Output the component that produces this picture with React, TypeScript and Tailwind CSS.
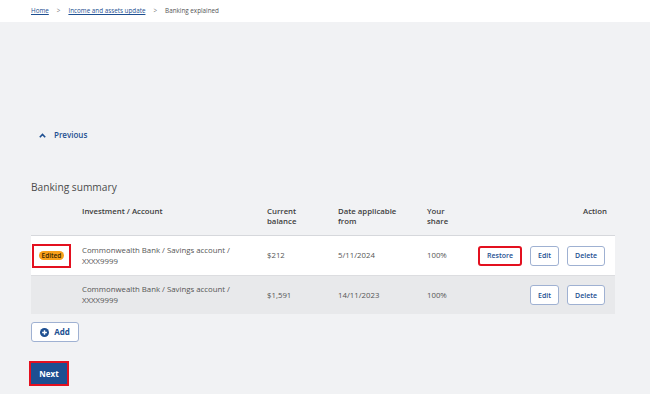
const rows = [
  {
    edited: true,
    account: "Commonwealth Bank / Savings account / XXXX9999",
    balance: "$212",
    date: "5/11/2024",
    share: "100%",
  },
  {
    edited: false,
    account: "Commonwealth Bank / Savings account / XXXX9999",
    balance: "$1,591",
    date: "14/11/2023",
    share: "100%",
  },
];

function ActionButton({ label, highlight }: { label: string; highlight?: boolean }) {
  return (
    <button
      type="button"
      className={`flex h-[20px] items-center justify-center rounded-[3px] bg-white px-[7px] text-[7px] font-semibold text-[#1d4f91] ${
        highlight ? "border-2 border-[#e3101f]" : "border border-[#9fb1d2]"
      }`}
    >
      {label}
    </button>
  );
}

export default function App() {
  return (
    <div className="min-h-[394px] bg-[#f1f2f4] font-['Open_Sans',sans-serif] text-[#4b4b4b]">
      <div className="flex h-[22px] items-center gap-[8px] bg-white px-[31px] text-[6.3px]">
        <span className="text-[#1d4f91] underline">Home</span>
        <span className="text-[#777]">&gt;</span>
        <span className="text-[#1d4f91] underline">Income and assets update</span>
        <span className="text-[#777]">&gt;</span>
        <span className="text-[#555]">Banking explained</span>
      </div>

      <div className="px-[31px]">
        <div className="mt-[107px] flex h-[12px] items-center gap-[8px] pl-[8px] text-[8px] font-semibold text-[#1d4f91]">
          <svg width="7" height="5" viewBox="0 0 7 5">
            <path d="M0.8 4.2 L3.5 1.4 L6.2 4.2" fill="none" stroke="#1d4f91" strokeWidth="1.6" />
          </svg>
          <span>Previous</span>
        </div>

        <h2 className="mt-[39px] text-[10.2px] leading-[14px] text-[#4b4b4b]">Banking summary</h2>

        <div className="mt-[12px] w-[584px]">
          <div className="grid h-[30px] grid-cols-[51px_185px_71px_89px_1fr_1fr] border-b border-[#d6d8dc] text-[7.8px] font-semibold leading-[10px] text-[#3d3d3d]">
            <div />
            <div>Investment / Account</div>
            <div>
              Current
              <br />
              balance
            </div>
            <div>
              Date applicable
              <br />
              from
            </div>
            <div>
              Your
              <br />
              share
            </div>
            <div className="pr-[8px] text-right">Action</div>
          </div>

          {rows.map((row, i) => (
            <div
              key={i}
              className={`grid h-[39px] grid-cols-[51px_185px_71px_89px_1fr_auto] items-center text-[7.8px] leading-[11px] text-[#555] ${
                row.edited ? "bg-white" : "border-t border-[#dcdde0] bg-[#e8e9eb]"
              }`}
            >
              <div className="pl-[1px]">
                {row.edited && (
                  <div className="flex h-[24px] w-[39px] items-center justify-center border-2 border-[#e3101f]">
                    <span className="rounded-full bg-[#f7a01a] px-[3px] text-[6.5px] font-semibold leading-[9px] text-[#3a2600]">
                      Edited
                    </span>
                  </div>
                )}
              </div>
              <div className="w-[162px]">{row.account}</div>
              <div>{row.balance}</div>
              <div>{row.date}</div>
              <div>{row.share}</div>
              <div className="flex items-center gap-[8px] pr-[10px]">
                {row.edited && <ActionButton label="Restore" highlight />}
                <ActionButton label="Edit" />
                <ActionButton label="Delete" />
              </div>
            </div>
          ))}
        </div>

        <button
          type="button"
          className="mt-[8px] flex h-[20px] w-[48px] items-center justify-center gap-[5px] rounded-[3px] border border-[#9fb1d2] bg-white text-[8px] font-bold text-[#1d4f91]"
        >
          <svg width="9" height="9" viewBox="0 0 10 10">
            <circle cx="5" cy="5" r="5" fill="#1d4f91" />
            <path d="M5 2.4 V7.6 M2.4 5 H7.6" stroke="white" strokeWidth="1.6" />
          </svg>
          Add
        </button>

        <button
          type="button"
          className="mt-[19px] -ml-[2px] flex h-[25px] w-[40px] items-center justify-center border-2 border-[#e3101f] bg-[#1d4f91] text-[8px] font-bold text-white"
        >
          Next
        </button>
      </div>
    </div>
  );
}
